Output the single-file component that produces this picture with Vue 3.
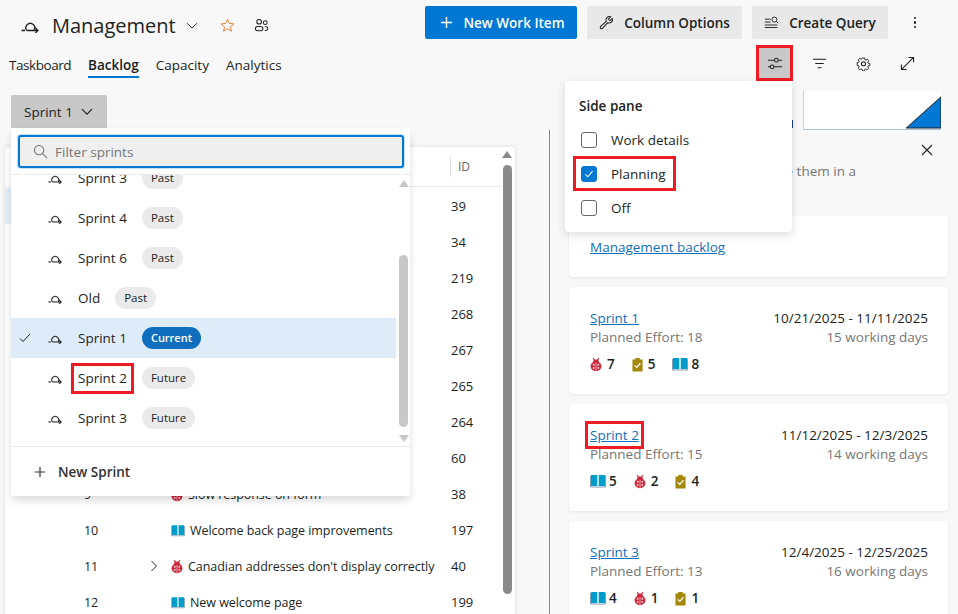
<script setup>
const rows = [
  { id: 39 }, { id: 34 }, { id: 219 }, { id: 268 },
  { id: 267 }, { id: 265 }, { id: 264 }, { id: 60 },
  { n: 9, id: 38, type: 'bug', title: 'Slow response on form' },
  { n: 10, id: 197, type: 'story', title: 'Welcome back page improvements' },
  { n: 11, id: 40, type: 'bug', title: "Canadian addresses don't display correctly", kids: true },
  { n: 12, id: 199, type: 'story', title: 'New welcome page' },
]

const sprintList = [
  { name: 'Sprint 3', state: 'Past' },
  { name: 'Sprint 4', state: 'Past' },
  { name: 'Sprint 6', state: 'Past' },
  { name: 'Old', state: 'Past' },
  { name: 'Sprint 1', state: 'Current', selected: true },
  { name: 'Sprint 2', state: 'Future', marked: true },
  { name: 'Sprint 3', state: 'Future' },
]

const cards = [
  { name: 'Sprint 1', effort: 18, dates: '10/21/2025 - 11/11/2025', days: 15, counts: [['bug', 7], ['task', 5], ['story', 8]] },
  { name: 'Sprint 2', effort: 15, dates: '11/12/2025 - 12/3/2025', days: 14, counts: [['story', 5], ['bug', 2], ['task', 4]], marked: true },
  { name: 'Sprint 3', effort: 13, dates: '12/4/2025 - 12/25/2025', days: 16, counts: [['story', 4], ['bug', 1], ['task', 1]] },
]
</script>

<template>
  <div class="page">
    <svg class="defs" width="0" height="0">
      <symbol id="i-iter" viewBox="0 0 18 14">
        <path d="M0.5 11.500h3.500M6 11.500h11M5.800 11.500A4.400 4.400 0 1 1 12.800 11.500M14.200 8.700l2.800 2.800-2.800 2.500" fill="none" stroke="currentColor" stroke-width="1.300" />
      </symbol>
      <symbol id="i-bug" viewBox="0 0 14 16">
        <path d="M3.500 0.500l2.500 3M10.500 0.500L8 3.500" stroke="#cc293d" stroke-width="1.200" fill="none" />
        <ellipse cx="7" cy="4.500" rx="3.400" ry="2.400" fill="#cc293d" />
        <ellipse cx="7" cy="10" rx="6.300" ry="5.800" fill="#cc293d" />
        <circle cx="4.300" cy="8.300" r="1.100" fill="#f6d7db" />
        <circle cx="9.700" cy="8.300" r="1.100" fill="#f6d7db" />
        <circle cx="4.300" cy="12" r="1.100" fill="#f6d7db" />
        <circle cx="9.700" cy="12" r="1.100" fill="#f6d7db" />
        <path d="M7 6v9.500" stroke="#f6d7db" stroke-width="0.800" />
      </symbol>
      <symbol id="i-task" viewBox="0 0 12 16">
        <path d="M0.500 2.500h3V1h5v1.500h3V15.500h-11z" fill="#a4880a" />
        <path d="M3 9l2.200 2.200L9.200 6.600" fill="none" stroke="#fff" stroke-width="1.400" />
      </symbol>
      <symbol id="i-story" viewBox="0 0 16 14">
        <path d="M1 1h6.300v11H1zM8.700 1H15v11H8.700z" fill="#009ccc" />
        <path d="M0.500 2v11h15V2" fill="none" stroke="#7f9fb8" stroke-width="1" />
      </symbol>
    </svg>

    <header class="top">
      <div class="title-group">
        <svg class="ico-title"><use href="#i-iter" /></svg>
        <h1>Management</h1>
        <svg class="chev-title" viewBox="0 0 12 8"><path d="M1 1.200l5 5 5-5" /></svg>
        <svg class="star" viewBox="0 0 16 16"><path d="M8 1.400l2 4.400 4.800.5-3.600 3.200 1 4.700L8 11.400l-4.200 2.800 1-4.700L1.200 6.300 6 5.800z" /></svg>
        <svg class="team" viewBox="0 0 16 16">
          <circle cx="5.500" cy="4" r="2.500" />
          <circle cx="12" cy="5" r="2" />
          <rect x="1.500" y="9" width="8" height="4.600" rx="2.300" />
          <path d="M11.500 9.300h1.200a2 2 0 0 1 0 4h-1.200" />
        </svg>
      </div>
      <div class="actions">
        <button class="btn primary">
          <svg viewBox="0 0 14 14"><path d="M7 1v12M1 7h12" /></svg>
          New Work Item
        </button>
        <button class="btn">
          <svg viewBox="0 0 16 16"><path d="M1.800 14.200a1.400 1.400 0 0 0 2 0l5.400-6a3.600 3.600 0 0 0 4.900-4.600L11.700 6 10 4.300l2.400-2.400a3.600 3.600 0 0 0-4.700 4.800l-5.900 5.500a1.400 1.400 0 0 0 0 2z" /></svg>
          Column Options
        </button>
        <button class="btn">
          <svg viewBox="0 0 18 16"><path d="M1 4h7M1 7.500h7M1 11h15M1 14h15" /><circle cx="12.500" cy="4.500" r="3" /><path d="M14.800 6.800l2.200 2" /></svg>
          Create Query
        </button>
        <span class="dots"><i></i><i></i><i></i></span>
      </div>
    </header>

    <div class="subbar">
      <nav class="tabs">
        <a>Taskboard</a>
        <a class="on">Backlog</a>
        <a>Capacity</a>
        <a>Analytics</a>
      </nav>
      <div class="tools">
        <span class="tool tool-on">
          <svg viewBox="0 0 16 16"><path d="M1 4.500h15M1 11.500h15" /><circle cx="10" cy="4.500" r="2" fill="#c8c8c8" /><circle cx="5.500" cy="11.500" r="2" fill="#c8c8c8" /></svg>
        </span>
        <span class="tool"><svg viewBox="0 0 16 16"><path d="M1 3.500h14M3.500 8h9M6 12.500h4" /></svg></span>
        <span class="tool">
          <svg viewBox="0 0 16 16"><path d="M6.800 1.500h2.400l.4 1.900 1.300.6 1.700-1 1.600 1.800-1.100 1.600.5 1.300 1.900.4v2.400l-1.900.4-.5 1.300 1.100 1.600-1.600 1.700-1.700-1-1.300.6-.4 1.800H6.800l-.4-1.800-1.300-.6-1.700 1-1.600-1.700 1.100-1.600-.5-1.300-1.900-.4V7.100l1.900-.4.500-1.300-1.100-1.600 1.600-1.800 1.700 1 1.300-.6z" transform="translate(0.800 0.700) scale(0.900)" /><circle cx="8" cy="8.300" r="2.200" /></svg>
        </span>
        <span class="tool"><svg viewBox="0 0 16 16"><path d="M1.500 14.500l13-13M9 1.500h5.500V7M1.500 9v5.500H7" /></svg></span>
      </div>
    </div>

    <div class="work">
      <section class="left">
        <button class="sprint-btn">
          Sprint 1
          <svg viewBox="0 0 12 8"><path d="M1 1.200l5 5 5-5" /></svg>
        </button>
        <div class="grid-card">
          <div class="grid">
            <div class="grid-head"><span class="head-id">ID</span></div>
            <div v-for="(r, i) in rows" :key="r.id" class="row" :class="{ first: i === 0 }">
              <span class="order">{{ r.n }}</span>
              <span class="caret">
                <svg v-if="r.kids" viewBox="0 0 8 12"><path d="M1.500 1l5 5-5 5" /></svg>
              </span>
              <span class="row-title">
                <svg v-if="r.type === 'bug'" class="ico-bug"><use href="#i-bug" /></svg>
                <svg v-if="r.type === 'story'" class="ico-story"><use href="#i-story" /></svg>
                {{ r.title }}
              </span>
              <span class="cell-id">{{ r.id }}</span>
            </div>
          </div>
          <div class="grid-scroll">
            <b class="up"></b>
            <b class="thumb"></b>
          </div>
        </div>
      </section>

      <aside class="side">
        <div class="chart-row">
          <i class="chart-bit"></i>
          <svg class="chart" viewBox="0 0 138 39" preserveAspectRatio="none"><polygon points="103,38 138,6 138,38" fill="#0078d4" /></svg>
        </div>
        <div class="close-row">
          <svg viewBox="0 0 12 12"><path d="M1 1l10 10M11 1L1 11" /></svg>
        </div>
        <p class="hint">move them in a</p>
        <div class="card backlog-card"><a class="link">Management backlog</a></div>
        <div v-for="c in cards" :key="c.name" class="card sprint-card">
          <div class="card-left">
            <a class="link" :class="{ marked: c.marked }">{{ c.name }}</a>
            <div class="muted">Planned Effort: {{ c.effort }}</div>
            <div class="counts">
              <span v-for="[kind, num] in c.counts" :key="kind" class="count">
                <svg :class="'ico-' + kind"><use :href="'#i-' + kind" /></svg>{{ num }}
              </span>
            </div>
          </div>
          <div class="card-right">
            <div class="dates">{{ c.dates }}</div>
            <div class="muted">{{ c.days }} working days</div>
          </div>
        </div>
      </aside>
    </div>

    <div class="sprint-menu">
      <div class="filter-wrap">
        <div class="filter">
          <svg viewBox="0 0 16 16"><circle cx="6.500" cy="6.500" r="5" /><path d="M10.200 10.200l4.800 4.800" /></svg>
          Filter sprints
        </div>
      </div>
      <div class="sprint-scroll">
        <div class="sprint-items">
          <div v-for="(s, i) in sprintList" :key="i" class="item" :class="{ sel: s.selected }">
            <span class="tick">
              <svg v-if="s.selected" viewBox="0 0 12 10"><path d="M1 5.500l3 3 7-7.500" /></svg>
            </span>
            <svg class="ico-iter"><use href="#i-iter" /></svg>
            <span class="item-name" :class="{ marked: s.marked }">{{ s.name }}</span>
            <span class="pill" :class="{ current: s.state === 'Current' }">{{ s.state }}</span>
          </div>
        </div>
        <div class="menu-scroll">
          <b class="up"></b>
          <b class="thumb"></b>
          <b class="down"></b>
        </div>
      </div>
      <div class="new-sprint">
        <svg viewBox="0 0 14 14"><path d="M7 1v12M1 7h12" /></svg>
        New Sprint
      </div>
    </div>

    <div class="pane-menu">
      <div class="pane-title">Side pane</div>
      <label class="opt"><span class="box"></span>Work details</label>
      <label class="opt marked-opt">
        <span class="box checked"><svg viewBox="0 0 12 10"><path d="M1.500 5.500l3 3 6-7" /></svg></span>Planning
      </label>
      <label class="opt"><span class="box"></span>Off</label>
    </div>
  </div>
</template>

<style scoped>
.page {
  position: relative;
  width: 958px;
  height: 614px;
  overflow: hidden;
  background: #f8f8f8;
  color: #201f1e;
  font-family: "Open Sans", "Noto Sans", sans-serif;
  font-size: 13.5px;
}
.defs {
  position: absolute;
}
svg {
  display: block;
  flex-shrink: 0;
  fill: none;
  stroke: currentColor;
}

.top {
  display: flex;
  justify-content: space-between;
  height: 45px;
  padding: 6px 0 0 21px;
  box-sizing: border-box;
}
.title-group {
  display: flex;
  align-items: center;
  height: 39px;
}
.ico-title {
  width: 18px;
  height: 14px;
  margin: 0 13px 0 0;
}
h1 {
  margin: 0;
  font-size: 20px;
  font-weight: 400;
  line-height: 39px;
}
.chev-title {
  width: 12px;
  height: 8px;
  margin: 0 0 0 10px;
}
.star {
  width: 15px;
  height: 15px;
  margin-left: 22px;
  stroke: #d67f3c;
  stroke-width: 1;
}
.team {
  width: 15px;
  height: 15px;
  margin-left: 19px;
  stroke-width: 1.100;
}
.actions {
  display: flex;
  gap: 10px;
  padding-right: 37px;
}
.btn {
  display: flex;
  align-items: center;
  justify-content: center;
  gap: 10px;
  height: 33px;
  padding: 0 12px;
  border: 0;
  border-radius: 2px;
  background: #e8e8e8;
  color: #201f1e;
  font: 600 13.5px "Open Sans", sans-serif;
}
.btn svg {
  width: 15px;
  height: 15px;
  stroke-width: 1.100;
}
.btn.primary {
  width: 152px;
  padding-left: 15px;
  background: #0078d4;
  color: #fff;
}
.btn.primary svg {
  width: 13px;
  height: 13px;
  stroke-width: 1.500;
}
.btn:nth-child(2) {
  width: 155px;
}
.btn:nth-child(3) {
  width: 136px;
}
.dots {
  display: flex;
  flex-direction: column;
  gap: 2px;
  align-items: center;
  height: 33px;
  justify-content: center;
  width: 12px;
  margin-left: 11px;
}
.dots i {
  width: 2.5px;
  height: 2.5px;
  border-radius: 50%;
  background: #201f1e;
}

.subbar {
  display: flex;
  justify-content: space-between;
  height: 36px;
}
.tabs {
  display: flex;
  gap: 17px;
  padding: 5px 0 0 9px;
}
.tabs a {
  height: 28px;
  padding-top: 5px;
  box-sizing: border-box;
  line-height: 20px;
}
.tabs a:first-child {
  letter-spacing: -0.45px;
}
.tabs a.on {
  font-weight: 600;
  border-bottom: 2px solid #0078d4;
}
.tools {
  display: flex;
  align-items: flex-start;
  gap: 14px;
  padding-right: 36px;
}
.tool {
  display: flex;
  align-items: center;
  justify-content: center;
  width: 30px;
  height: 36px;
}
.tool svg {
  width: 15px;
  height: 15px;
  stroke-width: 1.100;
}
.tool-on {
  box-sizing: border-box;
  width: 37px;
  margin-right: -3px;
  background: #c8c8c8;
  border: 3px solid #ed1c24;
}

.work {
  display: flex;
  height: 533px;
}
.left {
  width: 550px;
  flex-shrink: 0;
  box-sizing: border-box;
  border-right: 1px solid #8a8a8a;
  margin-top: 49px;
  height: 484px;
}
.sprint-btn {
  position: absolute;
  top: 95px;
  left: 11px;
  display: flex;
  align-items: center;
  gap: 8px;
  width: 96px;
  height: 33px;
  padding: 0 0 0 13px;
  border: 0;
  border-radius: 2px 2px 0 0;
  background: #c8c8c8;
  color: #201f1e;
  font: 13.5px "Open Sans", sans-serif;
}
.sprint-btn svg {
  width: 12px;
  height: 8px;
  stroke-width: 1.100;
}
.grid-card {
  display: flex;
  width: 510px;
  margin: 17px 0 0 5px;
  height: 480px;
  background: #fff;
  border-radius: 4px 4px 0 0;
  box-shadow: 0 0 4px rgba(0, 0, 0, 0.12);
  overflow: hidden;
}
.grid {
  width: 497px;
}
.grid-head {
  display: flex;
  justify-content: flex-end;
  height: 40px;
  margin-bottom: 1px;
  border-bottom: 1px solid #eaeaea;
  box-sizing: border-box;
  padding: 10px 10px 0 0;
}
.head-id {
  width: 42px;
  height: 20px;
  padding-left: 7px;
  box-sizing: border-box;
  border-left: 1px solid #e0e0e0;
  font-size: 12px;
  line-height: 20px;
  color: #666;
}
.row {
  display: flex;
  align-items: center;
  height: 36px;
  font-size: 12.5px;
  letter-spacing: -0.05px;
}
.row.first {
  box-shadow: inset 6px 0 0 #e4eff9;
}
.order {
  padding-left: 79px;
  box-sizing: content-box;
  width: 66px;
}
.caret {
  width: 21px;
}
.caret svg {
  width: 8px;
  height: 12px;
  stroke-width: 1;
}
.row-title {
  display: flex;
  align-items: center;
  width: 280px;
  gap: 5px;
  white-space: nowrap;
}
.cell-id {
  font-size: 13px;
}
.ico-bug {
  width: 12px;
  height: 15px;
  stroke: none;
}
.ico-story {
  width: 14px;
  height: 13px;
  stroke: none;
}
.ico-task {
  width: 11px;
  height: 15px;
  stroke: none;
}
.grid-scroll {
  position: relative;
  width: 13px;
}
.grid-scroll .up {
  position: absolute;
  top: 4px;
  left: 0;
  border: 5px solid transparent;
  border-top: 0;
  border-bottom: 7px solid #8a8a8a;
}
.grid-scroll .thumb {
  position: absolute;
  top: 18px;
  left: 1px;
  width: 9px;
  height: 429px;
  border-radius: 5px;
  background: #8a8a8a;
}

.side {
  flex: 1;
  min-width: 0;
  padding: 10px 10px 0 19px;
  box-sizing: border-box;
}
.chart-row {
  display: flex;
  align-items: flex-end;
  justify-content: flex-end;
  gap: 10px;
  height: 39px;
  padding-right: 7px;
}
.chart-bit {
  width: 1px;
  height: 8px;
  margin-bottom: 2px;
  background: #1b3f8f;
}
.chart {
  width: 138px;
  height: 39px;
  background: #fff;
  border-left: 1px solid #d0d0d0;
  border-bottom: 1px solid #a9c5dd;
  box-sizing: border-box;
}
.close-row {
  display: flex;
  justify-content: flex-end;
  padding: 14px 15px 0 0;
  height: 12px;
}
.close-row svg {
  width: 12px;
  height: 12px;
  stroke-width: 1.100;
}
.hint {
  margin: 3px 0 0;
  width: 287px;
  text-align: right;
  white-space: nowrap;
  color: #767676;
  line-height: 18px;
  height: 57px;
  padding-top: 3px;
  box-sizing: border-box;
}
.card {
  background: #fff;
  border-radius: 4px;
  box-shadow: 0 1px 3px rgba(0, 0, 0, 0.08);
}
.backlog-card {
  height: 61px;
  padding: 22px 21px 0;
  box-sizing: border-box;
  margin-bottom: 10px;
}
.link {
  color: #106ebe;
  text-decoration: underline;
  line-height: 18px;
}
.sprint-card {
  display: flex;
  justify-content: space-between;
  height: 107px;
  padding: 22px 20px 0 21px;
  box-sizing: border-box;
  margin-bottom: 10px;
}
.muted {
  color: #767676;
  line-height: 19px;
  margin-top: 1px;
}
.dates {
  line-height: 18px;
}
.card-right {
  text-align: right;
}
.counts {
  display: flex;
  gap: 17px;
  margin-top: 9px;
  font-weight: 600;
}
.count {
  display: flex;
  align-items: center;
  gap: 5px;
  line-height: 16px;
}
.count .ico-story {
  width: 16px;
  height: 14px;
  margin-right: -2px;
}
.link.marked {
  display: inline-block;
  outline: 3px solid #ed1c24;
  outline-offset: 2px;
}

.sprint-menu {
  position: absolute;
  top: 128px;
  left: 11px;
  width: 399px;
  height: 368px;
  background: #fff;
  box-shadow: 0 5px 10px -1px rgba(0, 0, 0, 0.16);
  border-radius: 0 2px 2px 2px;
}
.filter-wrap {
  height: 47px;
  padding: 7px 6px 0 7px;
  box-sizing: border-box;
  border-bottom: 1px solid #eaeaea;
}
.filter {
  display: flex;
  align-items: center;
  gap: 7px;
  height: 33px;
  padding-left: 13px;
  box-sizing: border-box;
  background: #efefef;
  border: 2px solid #0078d4;
  border-radius: 3px;
  box-shadow: 0 0 0 1px #c7e0f4;
  color: #767676;
}
.filter svg {
  width: 15px;
  height: 15px;
  stroke-width: 1.100;
}
.sprint-scroll {
  position: relative;
  display: flex;
  height: 271px;
  overflow: hidden;
}
.sprint-items {
  width: 385px;
  margin-top: -17px;
}
.item {
  display: flex;
  align-items: center;
  height: 40px;
}
.item.sel {
  background: #deecf9;
}
.tick {
  width: 37px;
  padding-left: 8px;
  box-sizing: border-box;
}
.tick svg {
  width: 12px;
  height: 10px;
  stroke-width: 1;
}
.ico-iter {
  width: 14px;
  height: 11px;
  margin-right: 16px;
}
.item-name {
  margin-right: 15px;
  line-height: 25px;
}
.item-name.marked {
  outline: 3px solid #ed1c24;
  outline-offset: 0;
  padding: 0 4px;
  margin: 0 11px 0 -4px;
}
.pill {
  height: 22px;
  padding: 0 9px;
  border-radius: 11px;
  background: #eaeaea;
  font-size: 11.5px;
  line-height: 22px;
}
.pill.current {
  background: #106ebe;
  color: #fff;
  font-size: 11px;
  font-weight: 600;
}
.menu-scroll {
  position: absolute;
  top: 0;
  right: 0;
  width: 11px;
  height: 100%;
}
.menu-scroll .up,
.menu-scroll .down {
  position: absolute;
  left: 0;
  border: 5px solid transparent;
}
.menu-scroll .up {
  top: 5px;
  border-top: 0;
  border-bottom: 7px solid #c8c8c8;
}
.menu-scroll .down {
  top: 260px;
  border-bottom: 0;
  border-top: 7px solid #c8c8c8;
}
.menu-scroll .thumb {
  position: absolute;
  top: 80px;
  left: 0;
  width: 9px;
  height: 172px;
  border-radius: 5px;
  background: #c8c8c8;
}
.new-sprint {
  display: flex;
  align-items: center;
  gap: 12px;
  height: 50px;
  padding-left: 23px;
  box-sizing: border-box;
  border-top: 1px solid #eaeaea;
  font-weight: 600;
  color: #323130;
}
.new-sprint svg {
  width: 12px;
  height: 12px;
  stroke-width: 1.300;
}

.pane-menu {
  position: absolute;
  top: 81px;
  left: 565px;
  width: 227px;
  height: 151px;
  padding: 16px 0 0 14px;
  box-sizing: border-box;
  background: #fff;
  border-radius: 0 0 4px 4px;
  box-shadow: 0 3px 10px rgba(0, 0, 0, 0.14);
}
.pane-title {
  font-weight: 600;
  line-height: 18px;
  margin-bottom: 8px;
}
.opt {
  display: flex;
  align-items: center;
  gap: 14px;
  height: 34px;
  padding-left: 2px;
}
.box {
  display: flex;
  align-items: center;
  justify-content: center;
  width: 16px;
  height: 16px;
  box-sizing: border-box;
  border: 1px solid #666;
  border-radius: 3px;
}
.box.checked {
  background: #0078d4;
  border-color: #0078d4;
  color: #fff;
}
.box svg {
  width: 10px;
  height: 8px;
  stroke-width: 1.300;
}
.marked-opt {
  position: relative;
}
.marked-opt::after {
  content: "";
  position: absolute;
  top: -1px;
  left: -6px;
  width: 103px;
  height: 35px;
  box-sizing: border-box;
  border: 3px solid #ed1c24;
}
</style>
